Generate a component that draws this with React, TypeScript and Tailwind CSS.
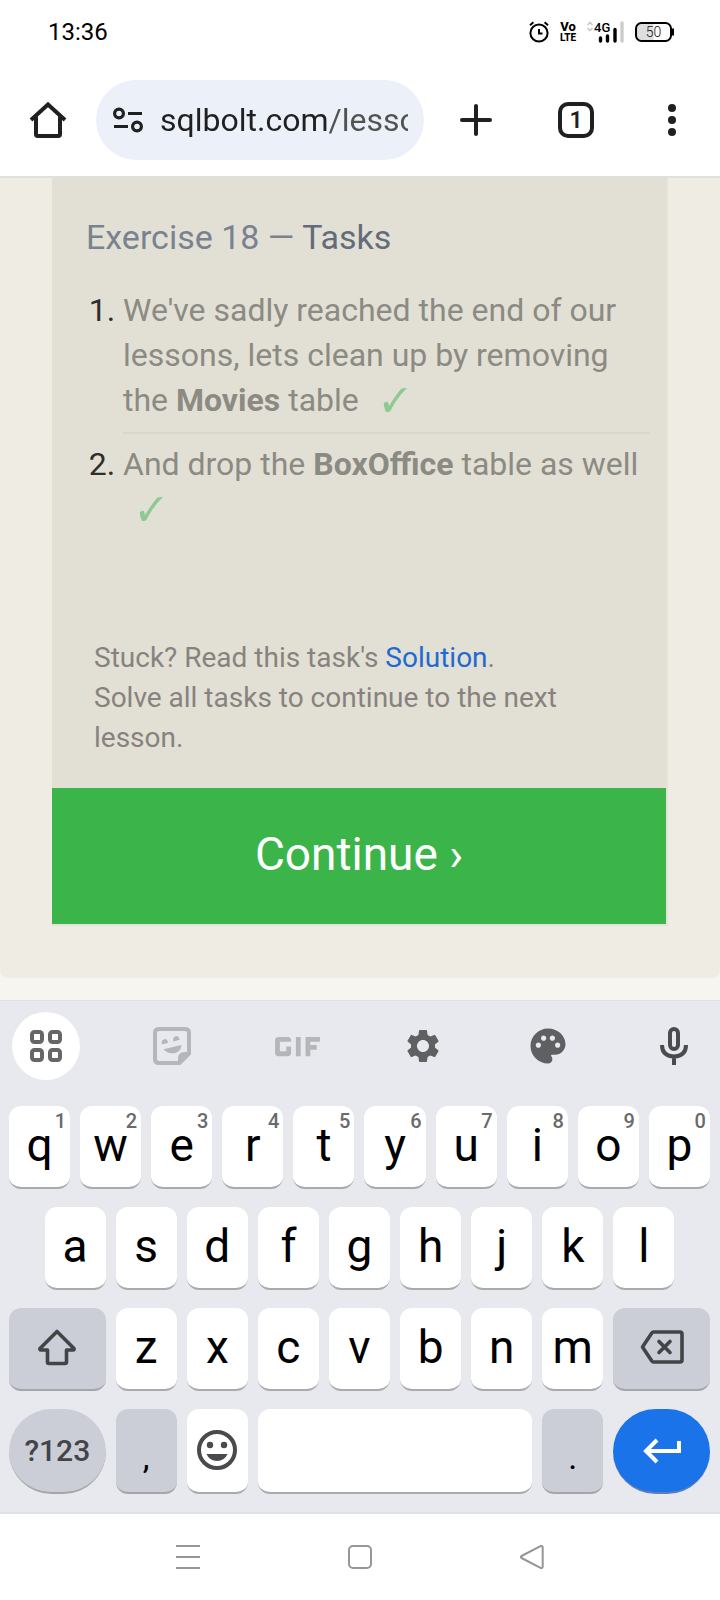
import type { ReactNode } from "react";
import { MdGif, MdPalette, MdSettings } from "react-icons/md";

function StatusBar() {
  return (
    <div className="flex h-16 items-center justify-between pr-[46px] pl-12">
      <time className="text-[24px] leading-6 text-black">13:36</time>
      <div className="flex items-center gap-[11px]">
        <svg width="20" height="22" viewBox="0 0 20 22" fill="none" stroke="#000" strokeWidth="2">
          <circle cx="10" cy="12" r="8.6" />
          <path d="M10 8v4.5h3.5" />
          <path d="M1 4.2 4.4 1.2M19 4.2 15.6 1.2" />
        </svg>
        <svg width="16" height="22" viewBox="0 0 16 22" fill="#000" textAnchor="middle" className="overflow-visible font-extrabold">
          <text x="8" y="10" className="text-[13px]">Vo</text>
          <text x="8" y="20" className="text-[10px]">LTE</text>
        </svg>
        <svg width="37" height="22" viewBox="0 0 37 22" className="overflow-visible">
          <path d="m.5 4 2.5-2.6L5.500 4M.5 7 3 9.600 5.500 7" fill="none" stroke="#c8c8c8" strokeWidth="1.6" />
          <text x="7" y="11" className="text-[13px] font-medium">4G</text>
          <path d="M13.500 17v3M20.500 15v5M28 8.500v11.500" stroke="#000" strokeWidth="3.4" strokeLinecap="round" />
          <path d="M35 2v18" stroke="#ccc" strokeWidth="3.4" strokeLinecap="round" />
        </svg>
        <svg width="39" height="22" viewBox="0 0 39 22">
          <path d="M18.500 2v18H6.500Q1 20 1 14.500v-7Q1 2 6.500 2z" fill="#dedede" />
          <rect x="1" y="2" width="35" height="18" rx="5.500" fill="none" stroke="#000" strokeWidth="2" />
          <path d="M38 7.500v7" stroke="#000" strokeWidth="2" />
          <text x="18.500" y="16" textAnchor="middle" className="text-[14px] font-light" fill="#111">50</text>
        </svg>
      </div>
    </div>
  );
}

function BrowserBar() {
  return (
    <header className="flex h-[114px] items-center border-b-2 border-[#dfe1dc]">
      <button aria-label="Home" className="flex w-24 shrink-0 justify-center">
        <svg width="40" height="40" viewBox="0 0 40 40" fill="none" stroke="#202020" strokeWidth="4" strokeLinejoin="round">
          <path d="M8 16.500V34.200q0 1.800 1.800 1.800H30.200q1.800 0 1.800-1.800V16.500" />
          <path d="M3 20 20 4.500 37 20" strokeLinejoin="miter" />
        </svg>
      </button>
      <div className="flex h-20 min-w-0 flex-1 items-center gap-4 rounded-full bg-[#ebf0f9] px-4">
        <button aria-label="Site information" className="shrink-0">
          <svg width="32" height="28" viewBox="0 0 32 28" fill="none" stroke="#202020" strokeWidth="3.200">
            <circle cx="7" cy="7.500" r="4.400" />
            <circle cx="25" cy="20.500" r="4.400" />
            <path d="M16 7.500h14M2 20.500h14" />
          </svg>
        </button>
        <input
          aria-label="Address"
          readOnly
          value="sqlbolt.com/lesson"
          className="h-12 min-w-0 flex-1 bg-linear-[90deg,#202020_167px,#50534f_167px] bg-clip-text text-[32px] text-transparent outline-none"
        />
      </div>
      <button aria-label="New tab" className="flex w-[104px] shrink-0 justify-center">
        <svg width="32" height="32" viewBox="0 0 32 32" stroke="#202020" strokeWidth="4" strokeLinecap="round">
          <path d="M16 2v28M2 16h28" />
        </svg>
      </button>
      <button aria-label="Open tabs" className="flex w-24 shrink-0 justify-center">
        <span className="flex size-9 items-center justify-center rounded-[10px] border-4 border-[#202020] pt-0.5 text-[23px] leading-6 font-semibold text-[#202020]">
          1
        </span>
      </button>
      <button aria-label="More" className="flex w-24 shrink-0 justify-center">
        <svg width="8" height="32" viewBox="0 0 8 32" fill="#202020">
          <circle cx="4" cy="4" r="4" />
          <circle cx="4" cy="16" r="4" />
          <circle cx="4" cy="28" r="4" />
        </svg>
      </button>
    </header>
  );
}

function Check() {
  return (
    <svg role="img" aria-label="Done" viewBox="0 0 24 26" fill="#8cca92" className="ml-4 inline-block h-[26px] w-6 translate-y-0.5 align-baseline">
      <path d="M.7 16.300Q2.200 14.400 4.300 14.800 5.600 15.400 5.800 19.300 14.500 5.500 18.500 1.600 20.500.8 24 .9 18 6.500 12.800 14.500 9.500 19.800 7.200 24.300 5.500 25.500 3 24.900 1 21.500.7 16.300z" />
    </svg>
  );
}

function Lesson() {
  return (
    <main className="bg-[#f6f5f0] pb-[22px]">
      <div className="rounded-b-lg bg-[#efece4] px-[52px] pb-[52px]">
        <section className="border-r-2 border-b-2 border-[#e4e3d8] bg-[#e2e0d5]">
          <div className="pt-[39px] pr-4 pb-[30px] pl-[34px]">
            <h1 className="text-[34px] leading-10 text-[#7a8290]">
              Exercise 18 — <span className="text-[#646b7a]">Tasks</span>
            </h1>
            <ol className="mt-[31px] list-decimal pl-[37px] text-[32px] leading-[45px] text-[#8b8a83] marker:text-[#2e2e2c]">
              <li className="border-b-2 border-[#d9d7cd] pb-[9px]">
                We've sadly reached the end of our lessons, lets clean up by removing the <b>Movies</b> table <Check />
              </li>
              <li className="pt-2">
                And drop the <b>BoxOffice</b> table as well <Check />
              </li>
            </ol>
            <p className="mt-[106px] pr-10 pl-2 text-[28px] leading-10 text-[#88827e]">
              Stuck? Read this task's{" "}
              <a href="#solution" className="text-[#1f6ad0]">
                Solution
              </a>
              .
              <br />
              Solve all tasks to continue to the next lesson.
            </p>
          </div>
          <button className="h-[136px] w-full bg-[#3bb54a] pb-1 text-[46px] text-white">Continue ›</button>
        </section>
      </div>
    </main>
  );
}

const keyShape = "relative flex h-[83px] items-center justify-center border-b-2 pb-1 text-black";
const letterKey = "col-span-2 rounded-xl border-[#a9aaae] bg-white text-[46px] leading-none";
const grayKey = "rounded-xl border-[#a4a6ab] bg-[#cbced6]";

function Letters({ letters, hints }: { letters: string; hints?: string }) {
  return letters.split("").map((letter, i) => (
    <button key={letter} className={`${keyShape} ${letterKey}`}>
      {letter}
      {hints && (
        <span className="absolute top-[5px] right-1 text-[20px] leading-5 font-medium text-[#6a6a6c]">{hints[i]}</span>
      )}
    </button>
  ));
}

function Row({ children }: { children: ReactNode }) {
  return <div className="grid grid-cols-20 gap-2.5">{children}</div>;
}

function Tool({ label, children }: { label: string; children: ReactNode }) {
  return (
    <button aria-label={label} className="flex size-[68px] items-center justify-center rounded-full text-[#5f6062] first:bg-white">
      {children}
    </button>
  );
}

function Keyboard() {
  return (
    <section aria-label="Keyboard" className="border-t border-b-2 border-[#e0e1e2] bg-[#e8e9ee] pb-[18px]">
      <div className="flex justify-between px-3 pt-[11px] pb-[26px]">
        <Tool label="Menu">
          <svg width="32" height="32" viewBox="0 0 32 32" fill="none" stroke="#666668" strokeWidth="4">
            <rect x="2" y="2" width="10" height="10" rx="2.500" />
            <rect x="20" y="2" width="10" height="10" rx="2.500" />
            <rect x="2" y="20" width="10" height="10" rx="2.500" />
            <rect x="20" y="20" width="10" height="10" rx="2.500" />
          </svg>
        </Tool>
        <Tool label="Stickers">
          <svg width="38" height="38" viewBox="0 0 38 38" fill="#b5b6b9">
            <path d="M26.500 36H6q-4 0-4-4V6q0-4 4-4h26q4 0 4 4v20.500z" fill="none" stroke="#b5b6b9" strokeWidth="4" strokeLinejoin="round" />
            <path d="M25 37v-5.500q0-6.500 6.500-6.500H37z" />
            <path d="M10.500 22.300 28.500 18q-.5 6.500-6.500 8-7 1.500-11.500-3.700z" />
            <path d="M8.800 17.500q-.8-4.300 2.400-5.300 3-.6 4 3.500zM20.300 14.500q-.8-4.300 2.400-5.300 3-.6 4 3.500z" />
          </svg>
        </Tool>
        <Tool label="GIF">
          <MdGif className="size-[77px] shrink-0 text-[#b5b6b9]" />
        </Tool>
        <Tool label="Settings">
          <MdSettings className="size-10" />
        </Tool>
        <Tool label="Themes">
          <MdPalette className="size-[42px]" />
        </Tool>
        <Tool label="Voice input">
          <svg width="28" height="38" viewBox="0 0 28 38" fill="none" stroke="#4a4b4d" strokeWidth="4">
            <rect x="10" y="2" width="8" height="20" rx="4" />
            <path d="M2 18q0 11 12 11.500Q26 29 26 18M14 29v9" />
          </svg>
        </Tool>
      </div>
      <div className="flex flex-col gap-[18px] pr-2.5 pl-[9px]">
        <Row>
          <Letters letters="qwertyuiop" hints="1234567890" />
        </Row>
        <Row>
          <span />
          <Letters letters="asdfghjkl" />
        </Row>
        <Row>
          <button aria-label="Shift" className={`${keyShape} ${grayKey} col-span-3`}>
            <svg width="40" height="38" viewBox="0 0 40 38" fill="none" stroke="#434447" strokeWidth="3.600" strokeLinejoin="round">
              <path d="M20 3.500 3 20.500q-.6 1.500 1 1.500h6.500V34q0 1.500 1.500 1.500H28q1.500 0 1.500-1.500V22H36q1.600 0 1-1.500z" />
            </svg>
          </button>
          <Letters letters="zxcvbnm" />
          <button aria-label="Backspace" className={`${keyShape} ${grayKey} col-span-3`}>
            <svg width="44" height="34" viewBox="0 0 44 34" fill="none" stroke="#434447" strokeWidth="3.600" strokeLinejoin="round" strokeLinecap="round">
              <path d="M13.500 2H40q2 0 2 2v26q0 2-2 2H13.500q-1 0-1.700-1L2.500 17 11.800 3q.7-1 1.700-1z" />
              <path d="m19 11.500 11 11M30 11.500l-11 11" />
            </svg>
          </button>
        </Row>
        <Row>
          <button className="relative col-span-3 flex h-[85px] items-center justify-center rounded-full border-b-2 border-[#a4a6ab] bg-[#cbced6] text-[30px] leading-none font-medium text-[#434447]">
            ?123
          </button>
          <button className="col-span-2 flex h-[85px] items-center justify-center rounded-xl border-b-2 border-[#a4a6ab] bg-[#cbced6] pt-3 text-[34px] leading-none text-black">
            ,
          </button>
          <button aria-label="Emoji" className="col-span-2 flex h-[85px] items-center justify-center rounded-xl border-b-2 border-[#a9aaae] bg-white pb-0.5">
            <svg width="40" height="40" viewBox="0 0 40 40" fill="#4a4a4c">
              <circle cx="20" cy="20" r="18" fill="none" stroke="#4a4a4c" strokeWidth="4" />
              <circle cx="13" cy="15" r="3.200" />
              <circle cx="27" cy="15" r="3.200" />
              <path d="M9.500 24h21q-3 7-10.500 7T9.500 24z" />
            </svg>
          </button>
          <button aria-label="Space" className="col-span-8 h-[85px] rounded-xl border-b-2 border-[#a9aaae] bg-white" />
          <button className="col-span-2 flex h-[85px] items-center justify-center rounded-xl border-b-2 border-[#a4a6ab] bg-[#cbced6] pt-3 text-[34px] leading-none text-black">
            .
          </button>
          <button aria-label="Enter" className="col-span-3 flex h-[85px] items-center justify-center rounded-full border-b-2 border-[#5d7fb5] bg-[#1a73e8]">
            <svg width="38" height="26" viewBox="0 0 38 26" fill="none" stroke="#fff" strokeWidth="4">
              <path d="M36 3v10H3.500" />
              <path d="M14 2 3 13l11 11" />
            </svg>
          </button>
        </Row>
      </div>
    </section>
  );
}

function NavigationBar() {
  return (
    <nav aria-label="System" className="flex h-[86px] items-center justify-center">
      <button aria-label="Recent apps" className="flex w-[172px] justify-center">
        <svg width="24" height="24" viewBox="0 0 24 24" stroke="#969696" strokeWidth="2">
          <path d="M0 1h24M0 12h24M0 23h24" />
        </svg>
      </button>
      <button aria-label="Home screen" className="flex w-[172px] justify-center">
        <svg width="24" height="24" viewBox="0 0 24 24" fill="none" stroke="#969696" strokeWidth="2">
          <rect x="1" y="1" width="22" height="22" rx="4" />
        </svg>
      </button>
      <button aria-label="Back" className="flex w-[172px] justify-center">
        <svg width="24" height="24" viewBox="0 0 24 24" fill="none" stroke="#969696" strokeWidth="2" strokeLinejoin="round">
          <path d="M1.500 11 20.500 1.200q2.200-.8 2.200 1.300v19q0 2.100-2.200 1.300L1.500 13q-1.300-1 0-2z" />
        </svg>
      </button>
    </nav>
  );
}

export default function App() {
  return (
    <div className="min-h-screen bg-white font-[Roboto,sans-serif]">
      <StatusBar />
      <BrowserBar />
      <Lesson />
      <Keyboard />
      <NavigationBar />
    </div>
  );
}
